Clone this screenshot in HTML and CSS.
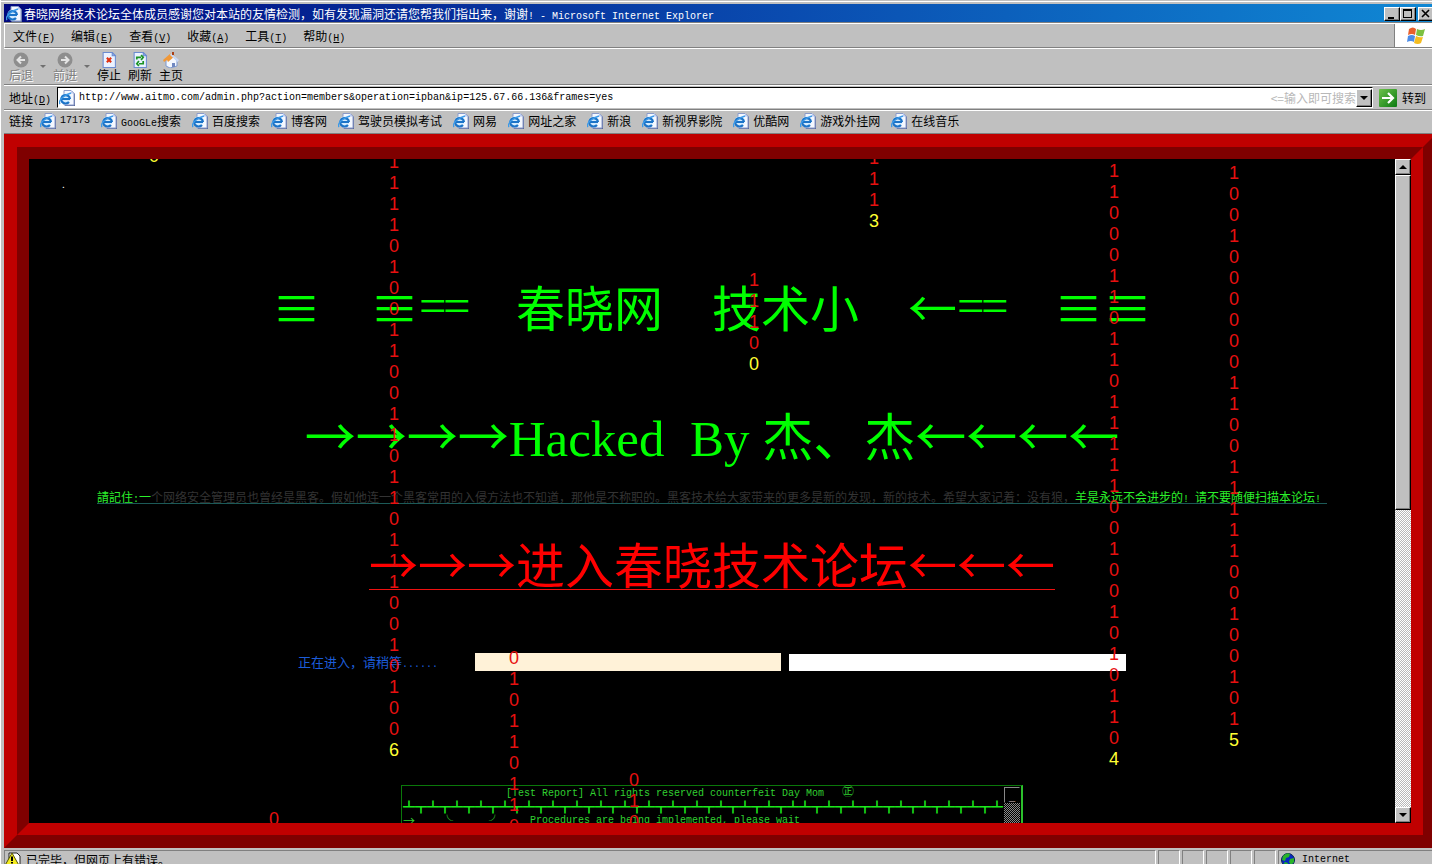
FILE: index.html
```
<!DOCTYPE html>
<html lang="zh-CN">
<head>
<meta charset="utf-8">
<title>春晓网络技术论坛</title>
<link rel="stylesheet" href="styles.css">
</head>
<body>
<svg class="defs" aria-hidden="true">
  <defs>
    <linearGradient id="glow" x1="0" y1="0" x2="1" y2="1"><stop offset="0" stop-color="#6cc24a"/><stop offset="1" stop-color="#0b7a12"/></linearGradient>
    <symbol id="ie" viewBox="0 0 16 16">
      <path d="M6 1h7l3 3v12H6z" fill="#5a6a9c"/>
      <path d="M5 .5h7l3 3v11.500H5z" fill="#f4f8ff" stroke="#8a9ac8" stroke-width="1"/>
      <path d="M12 0v3.500h3z" fill="#b8c8f0"/>
      <circle cx="6.500" cy="8.500" r="5" fill="#d4ecff"/>
      <path d="M11 9H3M11 9A4.400 4.200 0 1 0 10 12" fill="none" stroke="#1c74c8" stroke-width="2.200"/>
      <path d="M1 14C-1 11 4 5 12 3" fill="none" stroke="#3c9ae8" stroke-width="1.400"/>
    </symbol>
    <symbol id="sheet" viewBox="0 0 14 15">
      <path d="M1.500.5h8.500l3 3v11H1.500z" fill="#eaf2ff" stroke="#6c8cd0"/>
      <path d="M10 .5v3h3z" fill="#9cb8f0" stroke="#6c8cd0"/>
    </symbol>
  </defs>
</svg>
<div class="window">
  <header class="titlebar">
    <svg class="icon"><use href="#ie"/></svg>
    <h1 class="caption">春晓网络技术论坛全体成员感谢您对本站的友情检测，如有发现漏洞还请您帮我们指出来，谢谢<span class="mono">! - Microsoft Internet Explorer</span></h1>
    <div class="winbuttons">
      <button class="bevel" aria-label="最小化"><svg viewBox="0 0 14 12"><path d="M3 9h6v2H3z"/></svg></button>
      <button class="bevel" aria-label="最大化"><svg viewBox="0 0 14 12"><path d="M2 1h9v9H2zM3 3v6h7V3z" fill-rule="evenodd"/></svg></button>
      <button class="bevel closer" aria-label="关闭"><svg viewBox="0 0 14 12"><path d="M3 2l7 7M10 2l-7 7" stroke="#000" stroke-width="1.600"/></svg></button>
    </div>
  </header>
  <div class="menurow bar">
    <nav class="menu">
      <button>文件<span class="mono">(<u>F</u>)</span></button>
      <button>编辑<span class="mono">(<u>E</u>)</span></button>
      <button>查看<span class="mono">(<u>V</u>)</span></button>
      <button>收藏<span class="mono">(<u>A</u>)</span></button>
      <button>工具<span class="mono">(<u>T</u>)</span></button>
      <button>帮助<span class="mono">(<u>H</u>)</span></button>
    </nav>
    <div class="brand">
      <svg viewBox="0 0 20 18"><path d="M3 2q4-3 7 0l-1 6q-3-2-7 0z" fill="#e8602c"/><path d="M11 2q4 2 8 0l-2 7q-3 1-7-1z" fill="#7cc040"/><path d="M2 9q4-2 7 0l-1 6q-3-2-7 0z" fill="#4c8ce8"/><path d="M10 9q4 2 7 1l-2 6q-3 2-7 0z" fill="#f4bc20"/></svg>
    </div>
  </div>
  <div class="toolbar bar">
    <button class="tool" disabled><svg viewBox="0 0 16 16"><circle cx="8" cy="8" r="7.500" fill="#8e8e8e"/><path d="M12 8H5M8 4.500L4.500 8 8 11.500" fill="none" stroke="#e4e4e4" stroke-width="2"/></svg>后退</button>
    <span class="drop"></span>
    <button class="tool" disabled><svg viewBox="0 0 16 16"><circle cx="8" cy="8" r="7.500" fill="#8e8e8e"/><path d="M4 8h7M8 4.500L11.500 8 8 11.500" fill="none" stroke="#e4e4e4" stroke-width="2"/></svg>前进</button>
    <span class="drop"></span>
    <button class="tool"><svg viewBox="0 0 14 15"><use href="#sheet"/><path d="M5 5.500l4 4M9 5.500l-4 4" stroke="#e03010" stroke-width="2"/></svg>停止</button>
    <button class="tool"><svg viewBox="0 0 14 15"><use href="#sheet"/><path d="M4 7V5h4M8 3l2 2-2 2.500M10 8.500V11H6M6 13l-2-2 2-2.500" fill="none" stroke="#1c9424" stroke-width="1.600"/></svg>刷新</button>
    <button class="tool"><svg viewBox="0 0 16 16"><path d="M3 8l6-4 5 5v5l-7 2-4-2z" fill="#f4f8ff" stroke="#7c98d0"/><path d="M0 8l8-7 4 3-7 6-1-2-3 2z" fill="#f09838"/><path d="M8 1l8 7-1.500 2L7 3z" fill="#c8d8f4"/><path d="M9 0h2v3H9z" fill="#a84018"/><path d="M9 11h3v4H9z" fill="#7088c0"/></svg>主页</button>
  </div>
  <form class="address bar">
    <label for="url">地址<span class="mono">(<u>D</u>)</span></label>
    <div class="urlbox">
      <svg class="icon"><use href="#ie"/></svg>
      <input id="url" type="text" value="http://www.aitmo.com/admin.php?action=members&amp;operation=ipban&amp;ip=125.67.66.136&amp;frames=yes">
      <span class="hint">&lt;=输入即可搜索</span>
      <button type="button" class="bevel dropbtn" aria-label="展开"><span class="tri down"></span></button>
    </div>
    <button type="button" class="go"><svg viewBox="0 0 18 18"><rect width="18" height="18" rx="1" fill="url(#glow)"/><path d="M3 9h11M9 4l5 5-5 5" fill="none" stroke="#fff" stroke-width="2.200"/></svg>转到</button>
  </form>
  <nav class="links bar">
    <span>链接</span>
    <a href="#"><svg class="icon"><use href="#ie"/></svg><span class="mono">17173</span></a>
    <a href="#"><svg class="icon"><use href="#ie"/></svg><span><span class="mono">GooGLe</span>搜索</span></a>
    <a href="#"><svg class="icon"><use href="#ie"/></svg>百度搜索</a>
    <a href="#"><svg class="icon"><use href="#ie"/></svg>博客网</a>
    <a href="#"><svg class="icon"><use href="#ie"/></svg>驾驶员模拟考试</a>
    <a href="#"><svg class="icon"><use href="#ie"/></svg>网易</a>
    <a href="#"><svg class="icon"><use href="#ie"/></svg>网址之家</a>
    <a href="#"><svg class="icon"><use href="#ie"/></svg>新浪</a>
    <a href="#"><svg class="icon"><use href="#ie"/></svg>新视界影院</a>
    <a href="#"><svg class="icon"><use href="#ie"/></svg>优酷网</a>
    <a href="#"><svg class="icon"><use href="#ie"/></svg>游戏外挂网</a>
    <a href="#"><svg class="icon"><use href="#ie"/></svg>在线音乐</a>
  </nav>
  <div class="frame">
    <div class="frame-inner">
      <main class="stage">
        <p class="dot">.</p>
        <h2 class="banner"><span class="wide">≡</span><span class="wide"></span><span class="wide">≡</span><span class="half">=</span><span class="half">=</span><span class="wide"></span><span>春晓网</span><span class="wide"></span><span>技术小</span><span class="wide"></span><span class="wide">←</span><span class="half">=</span><span class="half">=</span><span class="wide"></span><span class="wide">≡</span><span class="wide">≡</span></h2>
        <h2 class="hacked"><span class="cjk">→→→→</span>Hacked  By <span class="cjk">杰、杰←←←←</span></h2>
        <p class="memo"><a href="#"><b>請記住<span class="mono">:</span>一</b>个网络安全管理员也曾经是黑客。假如他连一个黑客常用的入侵方法也不知道，那他是不称职的。黑客技术给大家带来的更多是新的发现，新的技术。希望大家记着：没有狼，<b>羊是永远不会进步的<span class="mono">! </span>请不要随便扫描本论坛<span class="mono">! </span></b></a></p>
        <h2 class="enter"><a href="#"><span class="cjk">→→→进入春晓技术论坛←←←</span></a></h2>
        <div class="loading">
          <label for="bar">正在进入，请稍等<span class="mono">......</span></label>
          <input id="bar" class="cream" type="text" readonly>
          <input class="white" type="text" readonly aria-label="进度">
        </div>
        <section class="terminal">
          <div class="lines">
            <p class="report">[Test Report] All rights reserved counterfeit Day Mom   <span class="seal">㊣</span></p>
            <p class="ruler">┻┳┻┳┻┳┻┳┻┳┻┳┻┳┻┳┻┳┻┳┻┳┻┳┻┳┻┳┻┳┻┳┻┻┳┻┳┻┳┻┳┻┳┻┳┻┳┻┳┻</p>
            <p class="proc"><span class="arrow">→</span><span class="face">╰灬　灬╯</span><span class="mono">Procedures are being implemented, please wait</span></p>
          </div>
          <div class="minibar"><button aria-label="收起">_</button></div>
        </section>
        <div class="rain" aria-hidden="true">
          <div class="drop-col c1"><b>0</b></div>
          <div class="drop-col c2">0</div>
          <div class="drop-col c3">1<br>1<br>1<br>1<br>0<br>1<br>0<br>0<br>1<br>1<br>0<br>0<br>1<br>1<br>0<br>1<br>1<br>0<br>1<br>1<br>1<br>0<br>0<br>1<br>0<br>1<br>0<br>0<br><b>6</b></div>
          <div class="drop-col c4">0<br>1<br>0<br>1<br>1<br>0<br>1<br>1<br>0</div>
          <div class="drop-col c5">0<br>1<br>0</div>
          <div class="drop-col c6">1<br>1<br>1<br>0<br><b>0</b></div>
          <div class="drop-col c7">1<br>1<br>1<br><b>3</b></div>
          <div class="drop-col c8">1<br>1<br>0<br>0<br>0<br>1<br>1<br>0<br>1<br>1<br>0<br>1<br>1<br>1<br>1<br>1<br>0<br>0<br>1<br>0<br>0<br>1<br>0<br>1<br>0<br>1<br>1<br>0<br><b>4</b></div>
          <div class="drop-col c9">1<br>0<br>0<br>1<br>0<br>0<br>0<br>0<br>0<br>0<br>1<br>1<br>0<br>0<br>1<br>1<br>1<br>1<br>1<br>0<br>0<br>1<br>0<br>0<br>1<br>0<br>1<br><b>5</b></div>
        </div>
      </main>
      <div class="scrollbar">
        <button class="bevel" aria-label="向上"><span class="tri up"></span></button>
        <div class="track"><div class="bevel thumb"></div></div>
        <button class="bevel" aria-label="向下"><span class="tri down"></span></button>
      </div>
    </div>
  </div>
  <footer class="status">
    <div class="cell grow"><svg class="icon" viewBox="0 0 16 16"><path d="M4 1h8l3 3v12H4z" fill="#fff" stroke="#222"/><path d="M7 1l6.500 11.500H.5z" fill="#f4ec20" stroke="#555500"/><path d="M6 4.500h2v4.500H6zM6 10h2v1.500H6z"/></svg>已完毕，但网页上有错误。</div>
    <div class="cell"></div><div class="cell"></div><div class="cell"></div><div class="cell"></div><div class="cell"></div>
    <div class="cell zone"><svg class="icon" viewBox="0 0 16 16"><circle cx="7" cy="8" r="6.500" fill="#0828c0" stroke="#042050"/><path d="M2 4q4-4 7-2l-1 3-3 1-1 3-3-1zM9 7l4-1v4l-3 3-2-3zM4 10l3 1-1 3q-3-1-3-3z" fill="#28b428"/></svg><span class="mono">Internet</span></div>
  </footer>
</div>
</body>
</html>
```
FILE: styles.css
```
* { box-sizing: border-box; }
body {
  margin: 0;
  overflow: hidden;
  background: #c0c0c0;
  color: #000;
  font: 12px/16px "Noto Sans CJK SC", sans-serif;
}
h1, h2, p { margin: 0; font-weight: normal; }
button { margin: 0; padding: 0; border: 0; background: none; color: inherit; font: inherit; }
.defs { position: absolute; width: 0; height: 0; }
.icon { width: 16px; height: 16px; flex: none; display: block; }
.mono { font-family: "Liberation Mono", monospace; font-size: 10px; line-height: 0; white-space: pre; }

/* Window chrome: runs a little past the right and bottom of the screen */
.window {
  display: flex;
  flex-direction: column;
  height: calc(100vh + 6px);
  margin-right: -4px;
  padding: 3px 0 0 3px;
  border-left: 1px solid #fff;
  background: linear-gradient(#c0c0c0 1px, #fff 1px, #fff 2px, #c0c0c0 2px);
}
.bevel {
  display: flex;
  align-items: center;
  justify-content: center;
  background: #c0c0c0;
  border: 1px solid;
  border-color: #fff #000 #000 #fff;
  box-shadow: inset -1px -1px #808080;
}
.titlebar {
  display: flex;
  align-items: center;
  gap: 2px;
  height: 20px;
  padding: 0 2px;
  background: linear-gradient(90deg, #00087e, #0a4cb0 55%, #1088d4);
  border-top: 1px solid #c0c0c0;
  color: #fff;
}
.caption { flex: 1; font-size: 12px; line-height: 16px; white-space: nowrap; }
.winbuttons { display: flex; }
.winbuttons .bevel { width: 16px; height: 14px; }
.winbuttons svg { width: 14px; height: 12px; }
.winbuttons .closer { margin-left: 2px; }
.bar { border-top: 1px solid #fff; border-bottom: 1px solid #808080; }

.menurow { display: flex; height: 25px; box-shadow: 0 -1px #808080; border-left: 1px solid #fff; }
.menu { display: flex; flex: 1; align-items: center; }
.menu button { padding: 0 8px; }
.brand { width: 42px; display: flex; align-items: center; justify-content: center; background: #fff; border-left: 1px solid #808080; }
.brand svg { width: 20px; height: 18px; }

.toolbar { display: flex; align-items: center; gap: 7px; height: 37px; padding-left: 5px; }
.tool { display: flex; flex-direction: column; align-items: center; line-height: 14px; }
.tool svg { width: 16px; height: 16px; }
.tool:disabled { color: #808080; text-shadow: 1px 1px #fff; }
.drop { border: 3px solid transparent; border-top-color: #707070; border-bottom: 0; }

.address { display: flex; align-items: center; height: 25px; padding: 1px 10px 1px 5px; gap: 6px; }
.urlbox { display: flex; flex: 1; align-items: center; height: 21px; padding-left: 1px; background: #fff; border: 1px solid; border-color: #000 #fff #fff #000; }
.urlbox input { flex: 1; min-width: 0; margin: 0; padding: 0 4px; border: 0; outline: 0; background: none; font: 10px/16px "Liberation Mono", monospace; color: #000; }
.hint { color: #b8b8b8; }
.dropbtn { width: 16px; height: 18px; }
.tri { border: 4px solid transparent; }
.tri.down { border-top-color: #000; border-bottom: 0; }
.tri.up { border-bottom-color: #000; border-top: 0; }
.go { display: flex; align-items: center; gap: 5px; }
.go svg { width: 18px; height: 18px; }

.links { display: flex; align-items: center; gap: 11px; height: 24px; padding: 0 0 2px 5px; white-space: nowrap; }
.links > span { margin-right: -4px; }
.links a { display: flex; align-items: center; gap: 4px; color: #000; text-decoration: none; }

/* Red ridge round the page */
.frame {
  display: flex;
  flex: 1;
  min-height: 0;
  border: 13px solid;
  border-color: #c00000 #7f0000 #7f0000 #c00000;
}
.frame-inner {
  display: flex;
  flex: 1;
  min-width: 0;
  border: 12px solid;
  border-color: #7f0000 #c00000 #c00000 #7f0000;
  background: #000;
}
.stage {
  position: relative;
  display: flex;
  flex: 1;
  flex-direction: column;
  align-items: center;
  min-width: 0;
  overflow: hidden;
  color: #0f0;
}
.stage > * { flex: none; }
.dot { align-self: flex-start; padding: 18px 0 0 33px; margin-bottom: 85px; line-height: 14px; color: #fff; font-size: 10px; }
.banner { display: flex; margin-bottom: 73px; font-size: 49px; line-height: 60px; }
.wide, .half { width: 49px; text-align: center; }
.half { width: 24px; font-family: "Liberation Serif", serif; }
.hacked, .enter { font-family: "Liberation Serif", "Noto Sans CJK SC", serif; white-space: pre; }
.hacked { margin-bottom: 21px; font-size: 51px; line-height: 60px; }
.cjk { font-family: "Noto Sans CJK SC", sans-serif; line-height: 0; }
.memo { margin-bottom: 43px; font-size: 12px; line-height: 13px; white-space: pre; }
.memo a { display: block; color: #333; text-decoration: none; border-bottom: 1px solid #1c5a58; }
.memo b { color: #2bf02b; font-weight: normal; }
.enter { margin-bottom: 63px; font-size: 49px; line-height: 42px; }
.enter a { display: block; color: #f00; text-decoration: none; border-bottom: 1px solid #f01010; }
.loading { display: flex; align-items: flex-end; gap: 8px; margin-bottom: 114px; font-size: 13px; line-height: 18px; color: #1c5cd8; }
.loading label { width: 169px; }
.loading input { border: 0; padding: 0; outline: 0; }
.cream { width: 306px; height: 18px; background: #fff2d8; }
.white { width: 337px; height: 17px; background: #fff; }
.terminal { display: flex; width: 622px; height: 120px; padding: 1px; border: 1px solid #0a780a; border-right: 2px solid #2cc02c; color: #30d030; }
.lines { flex: 1; }
.lines p { line-height: 13px; white-space: pre; }
.report { padding-left: 103px; font-family: "Liberation Mono", monospace; font-size: 10px; }
.seal { font-family: "Noto Sans CJK SC", sans-serif; font-size: 12px; line-height: 0; }
.ruler { color: #1ce81c; }
.lines .proc { display: flex; align-items: center; line-height: 16px; }
.proc .mono { line-height: 16px; }
.arrow { width: 38px; }
.face { width: 89px; }
.minibar { width: 16px; background: repeating-conic-gradient(#888 0 25%, #000 0 50%) 0 0 / 2px 2px; }
.minibar button { display: block; width: 16px; height: 16px; background: #000; border: 1px solid; border-color: #888 #000 #000 #888; color: #a09090; line-height: 10px; }

/* Falling digits float over the page */
.drop-col { position: absolute; width: 10px; color: #e81010; font: 18px/21px "Liberation Sans", sans-serif; text-align: center; }
.drop-col b { color: #ff3; font-weight: normal; }
.c1 { left: 120px; top: -13px; }
.c2 { left: 240px; top: 650px; }
.c3 { left: 360px; top: -7px; }
.c4 { left: 480px; top: 489px; }
.c5 { left: 600px; top: 611px; }
.c6 { left: 720px; top: 111px; }
.c7 { left: 840px; top: -11px; }
.c8 { left: 1080px; top: 2px; }
.c9 { left: 1200px; top: 4px; }

.scrollbar { display: flex; flex-direction: column; width: 16px; }
.scrollbar .bevel { width: 16px; height: 16px; }
.track { flex: 1; background: repeating-conic-gradient(#b8b8b8 0 25%, #fff 0 50%) 0 0 / 2px 2px; }
.scrollbar .thumb { height: 53%; }

.status { display: flex; gap: 2px; height: 22px; padding-top: 2px; }
.cell { display: flex; align-items: center; width: 22px; border: 1px solid; border-color: #808080 #fff #fff #808080; line-height: 14px; }
.cell.grow { flex: 1; gap: 5px; }
.cell.zone { width: 158px; gap: 5px; padding-left: 2px; }
```
